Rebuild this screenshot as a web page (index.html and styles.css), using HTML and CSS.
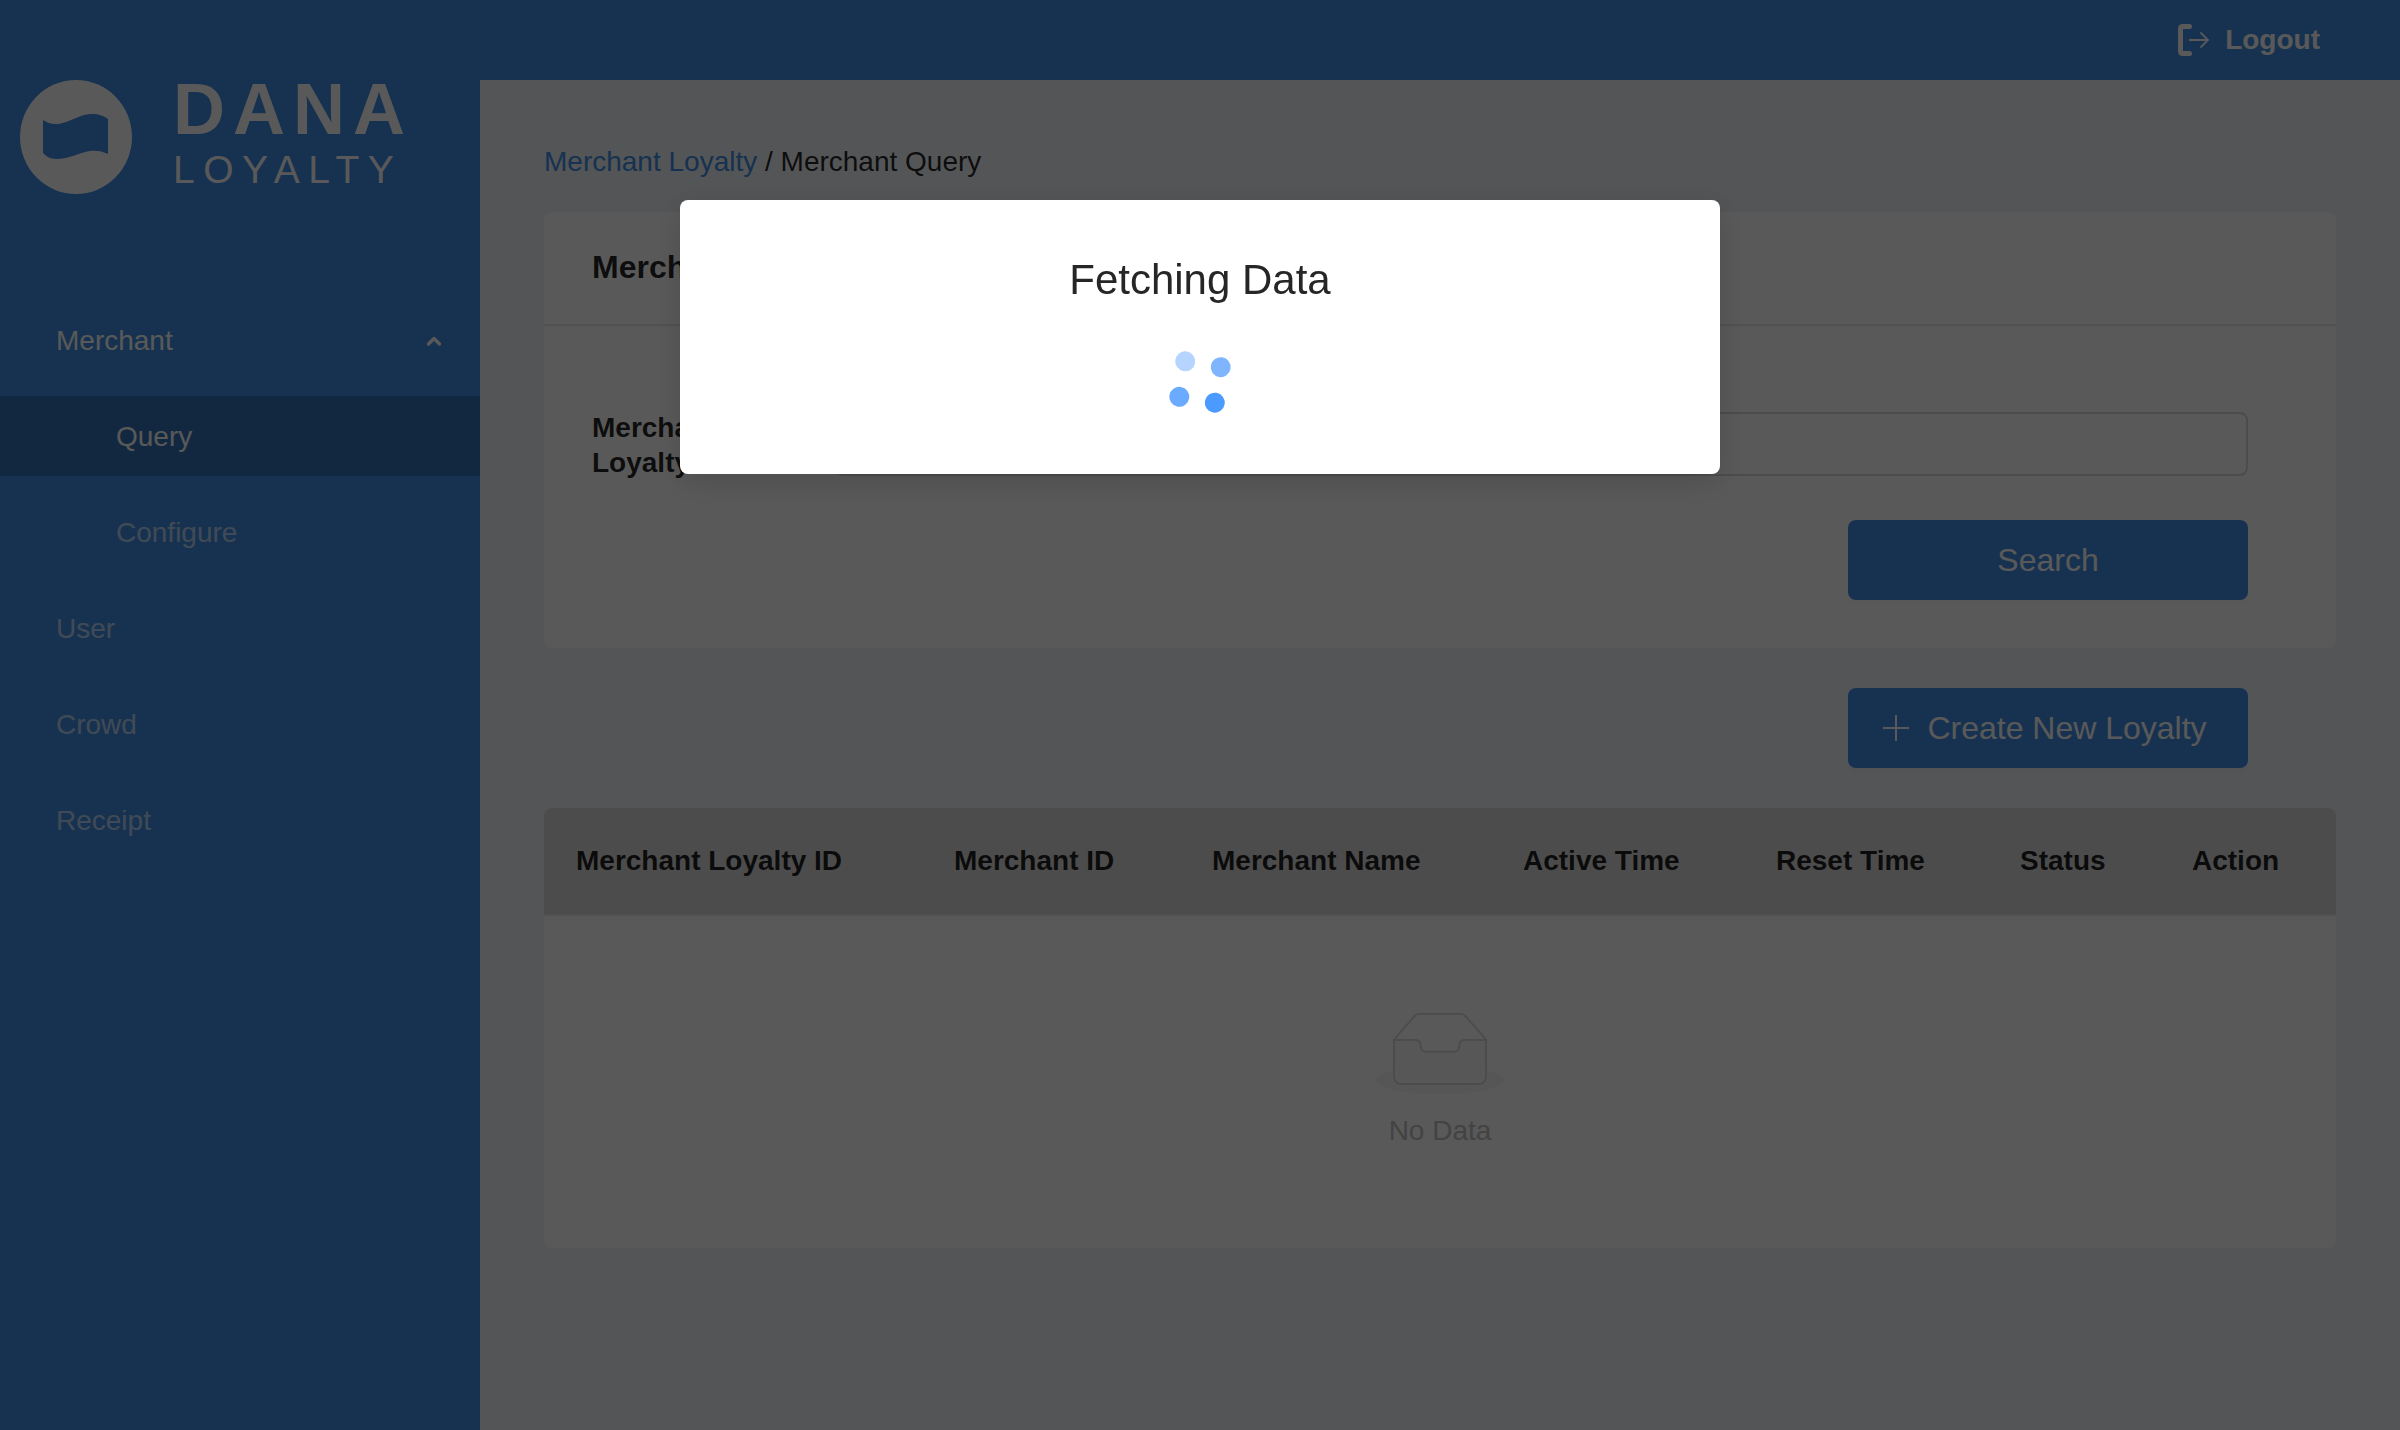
FILE: index.html
```html
<!DOCTYPE html>
<html lang="en">
    <head>
        <meta charset="utf-8">
        <title>Dana Loyalty</title>
        <link rel="stylesheet" href="styles.css">
    </head>
    <body>
        <header class="topbar">
            <a class="logout">
                <svg class="logout-icon" width="32" height="32" viewBox="0 0 32 32" fill="none" stroke="#fff">
                    <path d="M11.500 2.500H5Q2.500 2.500 2.500 5V27Q2.500 29.500 5 29.500H11.500" stroke-width="5" stroke-linecap="round"/>
                    <path d="M11 16H30M22.500 8.500L30 16L22.500 23.500" stroke-width="1.800"/>
                </svg>
                <span>Logout</span>
            </a>
        </header>
        <div class="layout">
            <aside class="sidebar">
                <div class="logo">
                    <svg width="112" height="114" viewBox="0 0 112 114">
                        <ellipse cx="56" cy="57" rx="56" ry="57" fill="#fff"/>
                        <path d="M23 40C30 45 38 45 46 42C55 39 62 34 72 34C79 34 84 36 88 39V74C82 71 76 70 70 71C60 72 50 79 36 79C30 79 26 76 23 73Z" fill="#3f8fe5"/>
                    </svg>
                    <div class="logo-text">
                        <div class="logo-name">DANA</div>
                        <div class="logo-sub">LOYALTY</div>
                    </div>
                </div>
                <ul class="menu">
                    <li class="menu-item menu-open">
                        <span>Merchant</span>
                        <svg width="16" height="12" viewBox="0 0 16 12" fill="none" stroke="#fff" stroke-width="3.500" stroke-linecap="round" stroke-linejoin="round"><path d="M2.500 9L8 3.500L13.500 9"/></svg>
                    </li>
                    <li class="menu-item menu-sub menu-selected">Query</li>
                    <li class="menu-item menu-sub">Configure</li>
                    <li class="menu-item">User</li>
                    <li class="menu-item">Crowd</li>
                    <li class="menu-item">Receipt</li>
                </ul>
            </aside>
            <main class="content">
                <div class="breadcrumb"><a>Merchant Loyalty</a> / Merchant Query</div>
                <section class="card">
                    <div class="card-head">Merchant Query</div>
                    <form class="card-body">
                        <div class="form-row">
                            <label class="form-label">Merchant<br>Loyalty ID</label>
                            <input class="form-input" type="text">
                        </div>
                        <div class="form-actions">
                            <button class="btn" type="button">Search</button>
                        </div>
                    </form>
                </section>
                <div class="toolbar">
                    <button class="btn btn-create" type="button">
                        <svg class="btn-icon" width="26" height="26" viewBox="0 0 26 26" stroke="#fff" stroke-width="2"><path d="M13 0V26M0 13H26"/></svg>
                        Create New Loyalty
                    </button>
                </div>
                <section class="table">
                    <div class="table-head">
                        <div>Merchant Loyalty ID</div>
                        <div>Merchant ID</div>
                        <div>Merchant Name</div>
                        <div>Active Time</div>
                        <div>Reset Time</div>
                        <div>Status</div>
                        <div>Action</div>
                    </div>
                    <div class="table-empty">
                        <svg width="128" height="82" viewBox="0 0 64 41">
                            <g transform="translate(0 1)" fill="none" fill-rule="evenodd">
                                <ellipse fill="#f5f5f5" cx="32" cy="33" rx="32" ry="7"/>
                                <g fill-rule="nonzero" stroke="#d9d9d9">
                                    <path d="M55 12.76L44.854 1.258C44.367.474 43.656 0 42.907 0H21.093c-.749 0-1.46.474-1.947 1.257L9 12.761V22h46v-9.24z"/>
                                    <path d="M41.613 15.931c0-1.605.994-2.93 2.227-2.931H55v18.137C55 33.26 53.68 35 52.05 35h-40.1C10.32 35 9 33.259 9 31.137V13h11.16c1.233 0 2.227 1.323 2.227 2.928v.022c0 1.605 1.005 2.901 2.237 2.901h14.752c1.232 0 2.237-1.308 2.237-2.913v-.007z" fill="#fafafa"/>
                                </g>
                            </g>
                        </svg>
                        <p>No Data</p>
                    </div>
                </section>
            </main>
        </div>
        <div class="overlay">
            <div class="modal">
                <h2 class="modal-title">Fetching Data</h2>
                <div class="spinner">
                    <i class="dot dot-a"></i>
                    <i class="dot dot-b"></i>
                    <i class="dot dot-c"></i>
                    <i class="dot dot-d"></i>
                </div>
            </div>
        </div>
    </body>
</html>
```

FILE: styles.css
```css
*{
    box-sizing:border-box;
}
body{
    margin:0;
    min-height:100vh;
    display:flex;
    flex-direction:column;
    overflow:hidden;
    background:#f0f2f5;
    font:28px/44px "Liberation Sans",Arial,sans-serif;
    color:rgba(0,0,0,.85);
}
ul,p,h2{
    margin:0;
    padding:0;
    list-style:none;
}

/* top bar */
.topbar{
    height:80px;
    flex:none;
    display:flex;
    justify-content:flex-end;
    align-items:center;
    padding-right:80px;
    background:#3f8fe5;
}
.logout{
    display:flex;
    align-items:center;
    gap:15px;
    color:#fff;
    font-weight:bold;
}

/* sidebar */
.layout{
    flex:1;
    display:flex;
}
.sidebar{
    width:480px;
    flex:none;
    background:#3f8fe5;
}
.logo{
    height:220px;
    display:flex;
    align-items:flex-start;
    gap:41px;
    padding-left:20px;
    color:#fff;
}
.logo-text{
    padding-top:1px;
}
.logo-name{
    font:bold 72px/56px "Liberation Sans",Arial,sans-serif;
    letter-spacing:8px;
}
.logo-sub{
    margin-top:17px;
    font:400 39px/32px "Liberation Sans",Arial,sans-serif;
    letter-spacing:8.5px;
}
.menu{
    color:rgba(255,255,255,.65);
}
.menu-item{
    height:80px;
    margin-bottom:16px;
    padding:2px 38px 0 56px;
    display:flex;
    justify-content:space-between;
    align-items:center;
}
.menu-open{
    color:#fff;
}
.menu-sub{
    padding-left:116px;
}
.menu-selected{
    background:#3372b7;
    color:#fff;
}

/* content */
.content{
    flex:1;
    padding:60px 64px 0;
}
.breadcrumb{
    height:72px;
}
.breadcrumb a{
    color:#3f8fe5;
}
.card{
    background:#fff;
    border-radius:8px;
}
.card-head{
    height:114px;
    padding:0 48px 2px;
    display:flex;
    align-items:center;
    border-bottom:2px solid #e8e8e8;
    font-size:32px;
    font-weight:bold;
}
.card-body{
    padding:86px 88px 48px 48px;
}
.form-row{
    display:flex;
    align-items:center;
    height:64px;
}
.form-label{
    width:243px;
    padding-top:2px;
    line-height:35px;
    font-weight:bold;
}
.form-input{
    flex:1;
    height:64px;
    border:2px solid #d9d9d9;
    border-radius:8px;
    background:#fff;
}
.form-actions{
    margin-top:44px;
    display:flex;
    justify-content:flex-end;
}
.btn{
    width:400px;
    height:80px;
    display:flex;
    justify-content:center;
    align-items:center;
    border:none;
    border-radius:8px;
    background:#3f8fe5;
    box-shadow:0 4px 0 rgba(0,0,0,.015);
    color:#fff;
    font:32px "Liberation Sans",Arial,sans-serif;
}
.btn-create{
    padding:0 6px 0 0;
}
.btn-icon{
    margin-right:18px;
}
.toolbar{
    margin-top:40px;
    padding-right:88px;
    display:flex;
    justify-content:flex-end;
}

/* table */
.table{
    margin-top:40px;
    background:#fff;
    border-radius:8px;
}
.table-head{
    height:108px;
    display:grid;
    grid-template-columns:378px 258px 311px 253px 244px 172px 176px;
    align-items:center;
    border-bottom:2px solid #e8e8e8;
    border-radius:8px 8px 0 0;
    background:#d9d9d9;
    font-weight:bold;
}
.table-head div{
    padding-left:32px;
}
.table-empty{
    height:332px;
    padding-top:96px;
    display:flex;
    flex-direction:column;
    align-items:center;
    color:#bfbfbf;
}
.table-empty p{
    margin-top:15px;
}

/* loading dialog */
.overlay{
    position:fixed;
    top:0;
    left:0;
    right:0;
    bottom:0;
    padding-top:200px;
    display:flex;
    justify-content:center;
    align-items:flex-start;
    background:rgba(0,0,0,.65);
}
.modal{
    width:1040px;
    height:274px;
    padding-top:56px;
    display:flex;
    flex-direction:column;
    align-items:center;
    border-radius:8px;
    background:#fff;
    box-shadow:0 8px 32px rgba(0,0,0,.15);
}
.modal-title{
    font-size:42px;
    line-height:48px;
    font-weight:normal;
    color:#262626;
}
.spinner{
    margin-top:50px;
    display:grid;
    grid-template-columns:20px 20px;
    gap:16px;
    transform:rotate(9.5deg);
}
.dot{
    width:20px;
    height:20px;
    border-radius:50%;
}
.dot-a{
    background:#b5d4ff;
}
.dot-b{
    background:#7fb5ff;
}
.dot-c{
    background:#6aaaff;
}
.dot-d{
    background:#4a9aff;
}
```
